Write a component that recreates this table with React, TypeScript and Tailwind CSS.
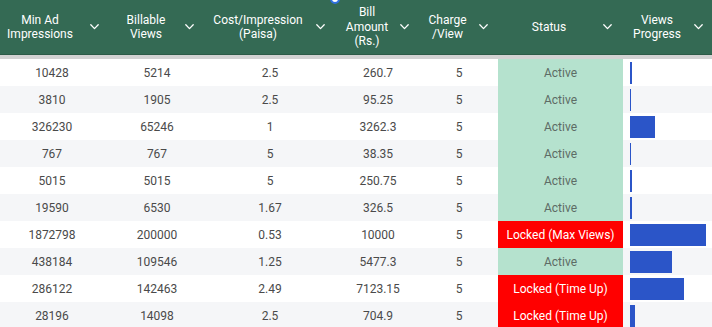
import React from "react";

type Row = {
  imp: string;
  views: number;
  cost: string;
  bill: string;
  charge: string;
  status: string;
};

const rows: Row[] = [
  { imp: "10428", views: 5214, cost: "2.5", bill: "260.7", charge: "5", status: "Active" },
  { imp: "3810", views: 1905, cost: "2.5", bill: "95.25", charge: "5", status: "Active" },
  { imp: "326230", views: 65246, cost: "1", bill: "3262.3", charge: "5", status: "Active" },
  { imp: "767", views: 767, cost: "5", bill: "38.35", charge: "5", status: "Active" },
  { imp: "5015", views: 5015, cost: "5", bill: "250.75", charge: "5", status: "Active" },
  { imp: "19590", views: 6530, cost: "1.67", bill: "326.5", charge: "5", status: "Active" },
  { imp: "1872798", views: 200000, cost: "0.53", bill: "10000", charge: "5", status: "Locked (Max Views)" },
  { imp: "438184", views: 109546, cost: "1.25", bill: "5477.3", charge: "5", status: "Active" },
  { imp: "286122", views: 142463, cost: "2.49", bill: "7123.15", charge: "5", status: "Locked (Time Up)" },
  { imp: "28196", views: 14098, cost: "2.5", bill: "704.9", charge: "5", status: "Locked (Time Up)" },
];

const Chevron = ({ cls }: { cls: string }) => (
  <svg className={cls} width="9" height="6" viewBox="0 0 9 6" fill="none">
    <path d="M0.8 0.8 L4.5 4.6 L8.2 0.8" stroke="white" strokeWidth="1.3" strokeLinecap="round" strokeLinejoin="round" />
  </svg>
);

const cols = "grid grid-cols-[104px_106px_120px_90px_78px_125px_89px]";

export default function App() {
  return (
    <div
      className="relative w-[712px] h-[327px] overflow-hidden bg-white text-[12px]"
      style={{ fontFamily: "Roboto, 'Liberation Sans', sans-serif" }}
    >
      <div className={`${cols} h-[55px] bg-[#346a54] text-white leading-[14.5px] border-b border-[#2c5b47]`}>
        <div className="flex items-center">
          <span className="flex-1 text-center mr-[9.5px]">Min Ad<br />Impressions</span>
          <Chevron cls="mr-[5.5px] shrink-0" />
        </div>
        <div className="flex items-center">
          <span className="flex-1 text-center pl-[3.5px]">Billable<br />Views</span>
          <Chevron cls="mr-[16.5px] shrink-0" />
        </div>
        <div className="flex items-center">
          <span className="flex-1 text-center mr-[9.5px]">Cost/Impression<br />(Paisa)</span>
          <Chevron cls="mr-[5.5px] shrink-0" />
        </div>
        <div className="flex items-center">
          <span className="flex-1 text-center pl-[4.5px]">Bill<br />Amount<br />(Rs.)</span>
          <Chevron cls="mr-[11.5px] shrink-0" />
        </div>
        <div className="flex items-center">
          <span className="flex-1 text-center mr-[3.5px]">Charge<br />/View</span>
          <Chevron cls="mr-[10.5px] shrink-0" />
        </div>
        <div className="flex items-center">
          <span className="flex-1 text-center mr-[2.5px]">Status</span>
          <Chevron cls="mr-[11.5px] shrink-0" />
        </div>
        <div className="flex items-center">
          <span className="flex-1 text-center mr-[2.5px]">Views<br />Progress</span>
          <Chevron cls="mr-[9.5px] shrink-0" />
        </div>
      </div>
      <div className="h-[4px] bg-[#d2d2d2]" />
      <div>
        {rows.map((r, i) => {
          const locked = r.status !== "Active";
          return (
            <div
              key={i}
              className={`${cols} h-[27px] text-[#4a4a4a] ${i % 2 === 0 ? "bg-white" : "bg-[#f5f6f8]"}`}
            >
              <div className="flex items-center justify-center">{r.imp}</div>
              <div className="flex items-center justify-center">{r.views}</div>
              <div className="flex items-center justify-center">{r.cost}</div>
              <div className="flex items-center justify-center pl-[6px]">{r.bill}</div>
              <div className="flex items-center justify-center">{r.charge}</div>
              <div
                className={`flex items-center justify-center ${
                  locked ? "bg-[#ff0000] text-white" : "bg-[#b5e2ce] text-[#5d6c65]"
                }`}
              >
                {r.status}
              </div>
              <div className="pl-[7px] pt-[3px] pb-[2px]">
                <div className="h-full bg-[#2b55c8]" style={{ width: `${(r.views / 200000) * 76}px` }} />
              </div>
            </div>
          );
        })}
      </div>
      <div className="absolute left-[330px] top-[-6px] w-[10px] h-[10px] rounded-full border-2 border-[#2f6fe0] bg-white" />
    </div>
  );
}
